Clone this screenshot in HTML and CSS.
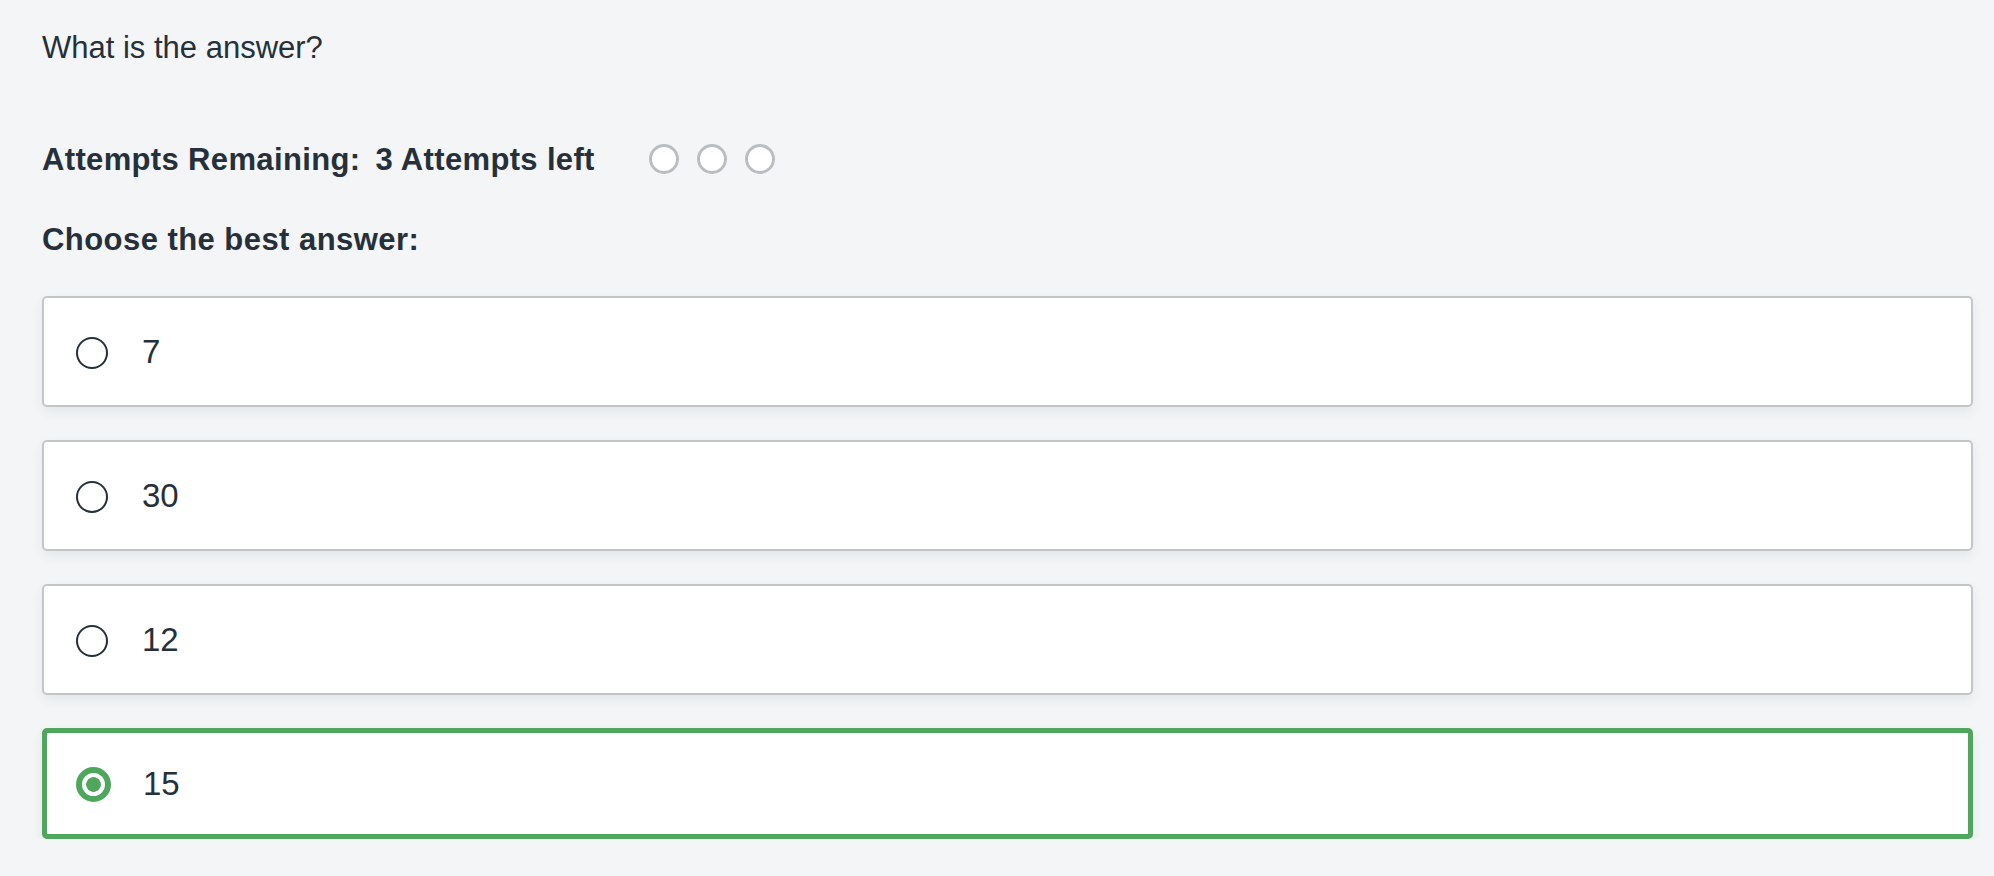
FILE: index.html
```html
<!DOCTYPE html>
<html>
<head>
<meta charset="utf-8">
<link rel="stylesheet" href="styles.css">
</head>
<body>
<main class="quiz">
  <p class="question">What is the answer?</p>
  <div class="attempts">
    <span class="attempts-label">Attempts Remaining:</span>
    <span class="attempts-count">3 Attempts left</span>
    <span class="attempt-dots">
      <span class="dot"></span><span class="dot"></span><span class="dot"></span>
    </span>
  </div>
  <p class="prompt">Choose the best answer:</p>
  <div class="options">
    <label class="option"><span class="radio"></span><span class="option-text">7</span></label>
    <label class="option"><span class="radio"></span><span class="option-text">30</span></label>
    <label class="option"><span class="radio"></span><span class="option-text">12</span></label>
    <label class="option selected"><span class="radio"></span><span class="option-text">15</span></label>
  </div>
</main>
</body>
</html>
```

FILE: styles.css
```css
html, body {
  margin: 0;
  padding: 0;
  background: #f4f5f7;
}
body {
  font-family: "Liberation Sans", Arial, sans-serif;
  color: #25303a;
}
.quiz {
  padding: 25px 21px 0 42px;
  display: flex;
  flex-direction: column;
}
.question {
  margin: 0;
  font-size: 31px;
  line-height: 46px;
  font-weight: 400;
}
.attempts {
  margin-top: 66px;
  display: flex;
  align-items: center;
  height: 46px;
  font-size: 31px;
  font-weight: 700;
  line-height: 46px;
  letter-spacing: 0.35px;
}
.attempts-count {
  margin-left: 15px;
}
.attempt-dots {
  display: flex;
  gap: 18px;
  margin-left: 54px;
  margin-top: -2px;
}
.dot {
  width: 30px;
  height: 30px;
  box-sizing: border-box;
  border: 3px solid #b9bec3;
  border-radius: 50%;
  background: #fff;
}
.prompt {
  margin: 34px 0 0 0;
  font-size: 31px;
  line-height: 46px;
  font-weight: 700;
  letter-spacing: 0.45px;
}
.options {
  margin-top: 33px;
  display: flex;
  flex-direction: column;
  gap: 33px;
}
.option {
  box-sizing: border-box;
  height: 111px;
  background: #fff;
  border: 2px solid #c3c6c9;
  border-radius: 5px;
  box-shadow: 0 5px 12px rgba(30, 40, 50, 0.07);
  display: flex;
  align-items: center;
  padding-left: 32px;
}
.radio {
  box-sizing: border-box;
  width: 32px;
  height: 32px;
  border: 2px solid #25303a;
  border-radius: 50%;
  flex: none;
  margin-top: 3px;
}
.option-text {
  font-size: 33px;
  line-height: 40px;
  margin-left: 34px;
}
.option.selected {
  border: 5px solid #4fa75d;
  padding-left: 29px;
}
.option.selected .radio {
  width: 35px;
  height: 35px;
  border: 6px solid #4fa75d;
  background: radial-gradient(circle, #4fa75d 0, #4fa75d 7px, #fff 7.6px);
  margin-top: 2px;
}
.option.selected .option-text {
  margin-left: 32px;
}
```
